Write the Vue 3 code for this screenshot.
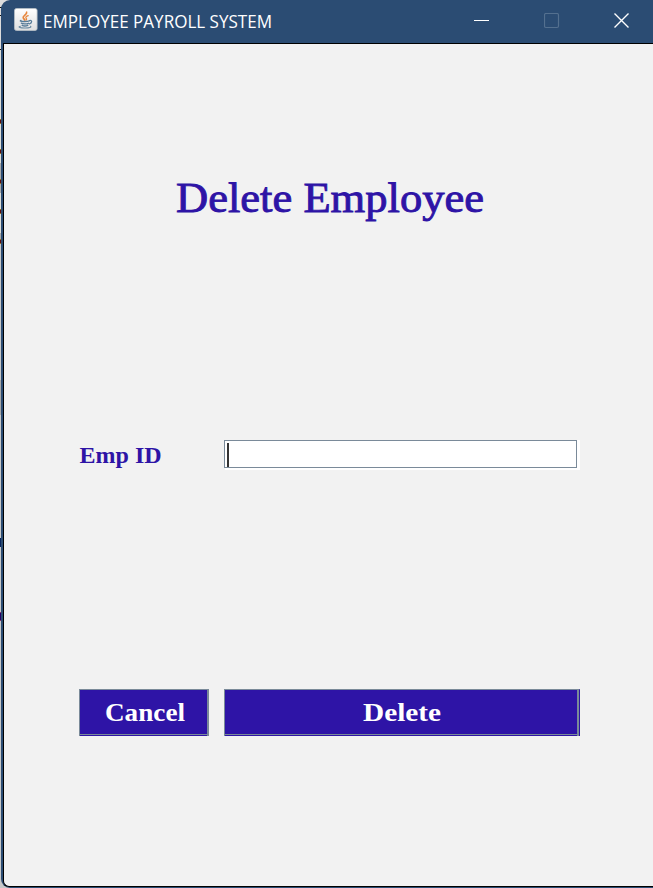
<script setup>
import { ref } from 'vue'

const title = 'EMPLOYEE PAYROLL SYSTEM'
const empId = ref('')
</script>

<template>
  <div class="desktop">
    <div class="window">
      <header class="titlebar">
        <svg class="app-icon" width="24" height="24" viewBox="0 0 24 24">
          <defs>
            <linearGradient id="tile" x1="0" y1="0" x2="0" y2="1">
              <stop offset="0" stop-color="#ffffff" />
              <stop offset="1" stop-color="#dedfe0" />
            </linearGradient>
          </defs>
          <rect x="0.5" y="0.5" width="22.6" height="22" rx="2" fill="url(#tile)" stroke="#b9c0c6" stroke-width="0.8" />
          <g fill="none" stroke-linecap="round">
            <path d="M12.6 4.2C13.4 6.6 8.4 7.5 9.2 9.8C9.5 10.7 10.4 11.3 10.8 12" stroke="#e8853a" stroke-width="1.7" />
            <path d="M14.2 7.6C11.7 8.5 11.2 9.5 12.4 10.6C12.8 11 12.5 11.7 12.1 12" stroke="#e8853a" stroke-width="1.2" />
            <path d="M7 12.4C5.2 13.1 7 13.6 10.5 13.5C12.6 13.5 14.4 13.2 15.3 12.8" stroke="#567b98" stroke-width="1.3" />
            <path d="M7.4 15.2C8.8 16.1 12.5 16.1 14.4 15.3M8.2 17.3C9.6 18 12.2 18 13.8 17.3" stroke="#567b98" stroke-width="1.4" />
            <path d="M15.6 12.6C18.5 11.8 18.2 15 15.4 15.8" stroke="#567b98" stroke-width="1.2" />
            <path d="M6.4 18.2C2.8 19.2 7 20.2 11.5 20C15 19.9 17.9 19.2 16.5 18.3" stroke="#6b8ba3" stroke-width="1.1" />
          </g>
        </svg>
        <svg class="caption" width="270" height="34">
          <text x="1" y="21" textLength="229" lengthAdjust="spacingAndGlyphs">{{ title }}</text>
        </svg>
        <div class="controls">
          <svg width="16" height="16" viewBox="0 0 16 16"><path d="M0 7.5H15" stroke="#fff" /></svg>
          <svg width="16" height="16" viewBox="0 0 16 16"><rect x="0.5" y="0.5" width="14" height="14" rx="1.5" fill="none" stroke="#54708f" stroke-width="1.2" /></svg>
          <svg width="16" height="16" viewBox="0 0 16 16"><path d="M0.5 0.5L14.5 14.5M14.5 0.5L0.5 14.5" stroke="#fff" stroke-width="1.4" /></svg>
        </div>
      </header>

      <main class="content">
        <svg class="heading" width="320" height="60">
          <text x="6" y="43.5" textLength="308" lengthAdjust="spacingAndGlyphs">Delete Employee</text>
        </svg>
        <label class="field">
          <svg class="label" width="144" height="30">
            <text x="0.6" y="23" textLength="82" lengthAdjust="spacingAndGlyphs">Emp ID</text>
          </svg>
          <span class="input-frame">
            <span class="input-box"><span class="caret"></span>{{ empId }}</span>
          </span>
        </label>
        <div class="actions">
          <button class="button cancel" type="button">
            <svg width="84" height="32"><text x="3" y="24" textLength="80" lengthAdjust="spacingAndGlyphs">Cancel</text></svg>
          </button>
          <button class="button delete" type="button">
            <svg width="84" height="32"><text x="3" y="24" textLength="78" lengthAdjust="spacingAndGlyphs">Delete</text></svg>
          </button>
        </div>
      </main>
    </div>
  </div>
</template>

<style>
body {
  overflow: hidden;
}
</style>

<style scoped>
.desktop {
  box-sizing: border-box;
  width: 653px;
  height: 888px;
  padding-left: 1px;
  background: linear-gradient(
    #dcdcdc 0 7px, #111 7px 8px, #dcdcdc 8px 15px, #111 15px 16px, #dcdcdc 16px 49px, #111 49px 50px,
    #deded8 50px 119px, #9a7222 119px 120px, #600909 120px 123px, #9a7222 123px 124px,
    #deded8 124px 149px, #9a7222 149px 150px, #600909 150px 153px, #9a7222 153px 154px,
    #deded8 154px 163px, #aaa 163px 179px, #9a7222 179px 180px, #600909 180px 183px, #9a7222 183px 184px,
    #aaa 184px 193px, #deded8 193px 209px, #9a7222 209px 210px, #600909 210px 213px, #9a7222 213px 214px,
    #deded8 214px 233px, #aaa 233px 239px, #9a7222 239px 240px, #600909 240px 243px, #9a7222 243px 244px,
    #c8c8c8 244px 380px, #a8a8a8 380px 415px, #c8c8c8 415px 538px, #06245c 538px 547px,
    #c8c8c8 547px 612px, #8a366f 612px 613px, #240067 613px 620px, #8a366f 620px 621px, #c8c8c8 621px
  );
}

.window {
  box-sizing: border-box;
  display: flex;
  flex-direction: column;
  height: 888px;
  padding: 0 0 1px 2px;
  overflow: hidden;
  background: #2b4c73;
  border-radius: 9px 0 0 9px;
}

.titlebar {
  display: flex;
  flex: none;
  align-items: flex-start;
  height: 43px;
}

.app-icon {
  margin: 8px 0 0 11px;
}

.caption {
  margin: 7px 0 0 4px;
  overflow: visible;
}

.caption text {
  font: 18px 'Open Sans', 'Noto Sans', sans-serif;
  fill: #fff;
}

.controls {
  display: flex;
  gap: 54px;
  margin: 13px 23px 0 auto;
}

.content {
  box-sizing: border-box;
  display: flex;
  flex: 1;
  flex-direction: column;
  border: solid #000;
  border-width: 1px 0 1px 1px;
  border-radius: 0 0 0 6px;
  padding: 124px 0 0 75px;
  background: #f2f2f2;
}

.content text {
  font-family: 'Liberation Serif', serif;
  fill: #2e14a6;
}

.heading {
  margin-left: 91px;
}

.heading text {
  font-size: 42px;
  stroke: #2e14a6;
  stroke-width: 0.9px;
}

.field {
  display: flex;
  margin-top: 212px;
}

.label {
  margin-right: 1px;
}

.content .label text {
  font-size: 24px;
  font-weight: bold;
}

.input-frame {
  box-sizing: border-box;
  width: 356px;
  height: 30px;
  padding: 0 3px 2px 0;
  background: linear-gradient(#fff, #fff) 1px 0 no-repeat;
}

.input-box {
  box-sizing: border-box;
  display: block;
  height: 28px;
  padding: 2px;
  border: 1px solid #7a8a99;
  background: #fff;
}

.caret {
  display: block;
  width: 2px;
  height: 24px;
  background: #333;
}

.actions {
  display: flex;
  gap: 15px;
  margin-top: 219px;
}

.button {
  box-sizing: border-box;
  display: flex;
  align-items: center;
  justify-content: center;
  height: 47px;
  padding: 0;
  border: 1px solid #7a8a99;
  border-bottom: 0;
  background: linear-gradient(#7a8a99, #7a8a99) 0 44px / 100% 1px no-repeat, #2e14a6;
}

.content .button text {
  font-size: 25px;
  font-weight: bold;
  fill: #fff;
}

.cancel {
  width: 130px;
  border-right-width: 2px;
}

.delete {
  width: 356px;
  border-right: 1px solid #2e14a6;
  box-shadow: inset -2px 0 #7a8a99;
}
</style>
